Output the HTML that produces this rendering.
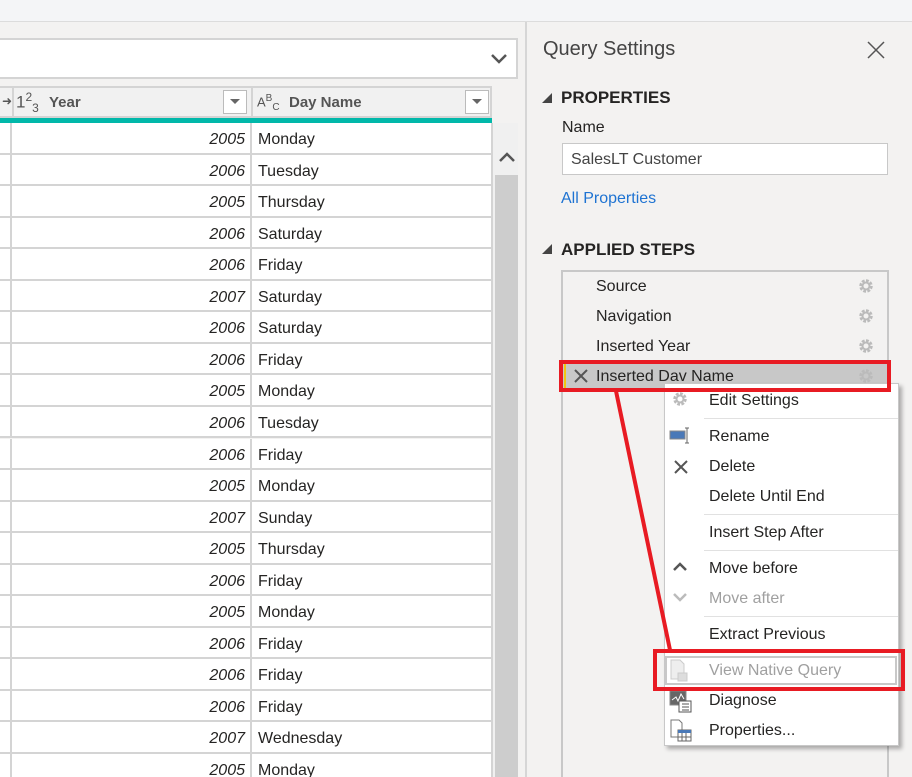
<!DOCTYPE html>
<html><head><style>
*{margin:0;padding:0;box-sizing:border-box}
html,body{width:912px;height:777px;overflow:hidden}
body{background:#f3f2f1;font-family:"Segoe UI","Liberation Sans",sans-serif;position:relative;color:#252423}
.a{position:absolute}
.row{position:absolute;left:0;width:492px;height:31.55px;border-bottom:2px solid #d4d4d4;background:#fff;font-size:16px}
.row .c0{position:absolute;left:0;top:0;width:12px;height:100%;border-right:2px solid #d4d4d4}
.row .y{position:absolute;left:12px;width:240px;text-align:right;padding-right:5px;font-style:italic;border-right:2px solid #d4d4d4;height:30px;top:0;line-height:33px}
.row .d{position:absolute;left:258px;line-height:33px}
.step{position:absolute;left:596px;font-size:16px}
.gear{position:absolute;left:858px;width:16px;height:16px}
.mi{position:absolute;left:709px;font-size:16px;color:#252423}
.sep{position:absolute;left:704px;width:194px;height:1px;background:#e1e1e1}
</style></head><body>
<div class="a" style="left:0;top:0;width:912px;height:22px;background:#f4f5f7;border-bottom:1px solid #dcdcdc"></div>
<div class="a" style="left:0;top:38px;width:518px;height:41px;background:#fff;border:2px solid #d4d4d4;border-left:none"></div>
<svg class="a" style="left:489px;top:52px" width="20" height="14"><path d="M3 3 L10 10 L17 3" stroke="#555" stroke-width="2.5" fill="none"/></svg>
<div class="a" style="left:0;top:86px;width:492px;height:32px;background:#f1f1f1;border:2px solid #d4d4d4;border-left:none"></div>
<div class="a" style="left:12px;top:86px;width:2px;height:32px;background:#d4d4d4"></div>
<div class="a" style="left:251px;top:86px;width:2px;height:32px;background:#d4d4d4"></div>
<div class="a" style="left:2px;top:94px;width:9px;height:18px;font-size:12px;color:#555">➜</div>
<div class="a" style="left:16px;top:90px;font-size:17px;color:#555">1<sup style="font-size:12px">2</sup><sub style="font-size:12px">3</sub></div>
<div class="a" style="left:49px;top:94px;font-size:15px;font-weight:bold;color:#555">Year</div>
<div class="a" style="left:223px;top:90px;width:24px;height:24px;border:1px solid #bbb;background:#fff"></div>
<svg class="a" style="left:229px;top:98px" width="12" height="8"><path d="M1 1 L11 1 L6 6Z" fill="#666"/></svg>
<div class="a" style="left:257px;top:93px;font-size:13px;color:#555">A<sup style="font-size:10px">B</sup><sub style="font-size:10px">C</sub></div>
<div class="a" style="left:289px;top:94px;font-size:15px;font-weight:bold;color:#555">Day Name</div>
<div class="a" style="left:465px;top:90px;width:24px;height:24px;border:1px solid #bbb;background:#fff"></div>
<svg class="a" style="left:471px;top:98px" width="12" height="8"><path d="M1 1 L11 1 L6 6Z" fill="#666"/></svg>
<div class="a" style="left:0;top:118px;width:492px;height:6px;background:#01b8aa"></div>
<div id="rows"></div>
<div class="a" style="left:491px;top:123px;width:2px;height:654px;background:#d4d4d4"></div>
<div class="a" style="left:493px;top:123px;width:25px;height:654px;background:#f0f0f0"></div>
<svg class="a" style="left:497px;top:150px" width="20" height="14"><path d="M3 11 L10 4 L17 11" stroke="#555" stroke-width="2.5" fill="none"/></svg>
<div class="a" style="left:495px;top:175px;width:23px;height:602px;background:#cdcdcd"></div>
<div class="a" style="left:525px;top:22px;width:2px;height:755px;background:#d6d6d6"></div>
<div class="a" style="left:543px;top:38px;font-size:20px;color:#444">Query Settings</div>
<svg class="a" style="left:866px;top:40px" width="20" height="20"><path d="M2 2 L18 18 M18 2 L2 18" stroke="#555" stroke-width="1.5"/></svg>
<svg class="a" style="left:541px;top:92px" width="12" height="12"><path d="M11 1 L11 11 L1 11Z" fill="#444"/></svg>
<div class="a" style="left:561px;top:88px;font-size:17px;font-weight:bold;color:#252423">PROPERTIES</div>
<div class="a" style="left:562px;top:119px;font-size:16px">Name</div>
<div class="a" style="left:562px;top:143px;width:326px;height:32px;background:#fff;border:1px solid #c8c8c8;font-size:16px;padding:7px 8px;color:#444">SalesLT Customer</div>
<div class="a" style="left:561px;top:190px;font-size:16px;color:#1e73d2">All Properties</div>
<svg class="a" style="left:541px;top:243px" width="12" height="12"><path d="M11 1 L11 11 L1 11Z" fill="#444"/></svg>
<div class="a" style="left:561px;top:240px;font-size:17px;font-weight:bold">APPLIED STEPS</div>
<div class="a" style="left:561px;top:270px;width:328px;height:520px;border:2px solid #c8c8c8"></div>
<div class="step" style="top:278px">Source</div>
<div class="step" style="top:308px">Navigation</div>
<div class="step" style="top:338px">Inserted Year</div>
<div class="a" style="left:563px;top:363px;width:324px;height:26px;background:#c8c8c8"></div>
<div class="a" style="left:564px;top:364px;width:2px;height:24px;background:#f2c811"></div>
<svg class="a" style="left:573px;top:368px" width="16" height="16"><path d="M2 2 L14 14 M14 2 L2 14" stroke="#555" stroke-width="2"/></svg>
<div class="step" style="top:368px">Inserted Dav Name</div>
<svg width="0" height="0" style="position:absolute"><defs><g id="g"><circle cx="8" cy="8" r="5" fill="none" stroke="#bbb" stroke-width="3.5" stroke-dasharray="2.6 1.3"/><circle cx="8" cy="8" r="3.5" fill="none" stroke="#bbb" stroke-width="2"/></g></defs></svg>
<svg class="gear" style="top:278px"><use href="#g"/></svg>
<svg class="gear" style="top:308px"><use href="#g"/></svg>
<svg class="gear" style="top:338px"><use href="#g"/></svg>
<svg class="gear" style="top:368px"><use href="#g"/></svg>
<div class="a" style="left:664px;top:383px;width:235px;height:363px;background:#fff;border:1px solid #c8c8c8;box-shadow:3px 3px 4px rgba(0,0,0,.3)"></div>
<svg class="gear" style="left:672px;top:391px"><use href="#g"/></svg>
<div class="mi" style="top:392px">Edit Settings</div>
<div class="sep" style="top:418px"></div>
<svg class="a" style="left:669px;top:427px" width="22" height="18"><rect x="1" y="4" width="15" height="8" fill="#4a79b8" stroke="#888"/><path d="M18 1 V16 M16 1 H20 M16 16 H20" stroke="#666"/></svg>
<div class="mi" style="top:428px">Rename</div>
<svg class="a" style="left:673px;top:459px" width="16" height="16"><path d="M2 2 L14 14 M14 2 L2 14" stroke="#555" stroke-width="2"/></svg>
<div class="mi" style="top:458px">Delete</div>
<div class="mi" style="top:488px">Delete Until End</div>
<div class="sep" style="top:514px"></div>
<div class="mi" style="top:524px">Insert Step After</div>
<div class="sep" style="top:550px"></div>
<svg class="a" style="left:672px;top:562px" width="16" height="10"><path d="M2 8 L8 2 L14 8" stroke="#555" stroke-width="2.5" fill="none"/></svg>
<div class="mi" style="top:560px">Move before</div>
<svg class="a" style="left:672px;top:592px" width="16" height="10"><path d="M2 2 L8 8 L14 2" stroke="#bbb" stroke-width="2.5" fill="none"/></svg>
<div class="mi" style="top:590px;color:#a0a0a0">Move after</div>
<div class="sep" style="top:616px"></div>
<div class="mi" style="top:626px">Extract Previous</div>
<div class="a" style="left:665px;top:656px;width:232px;height:29px;border:2px solid #c8c8c8"></div>
<svg class="a" style="left:669px;top:659px" width="22" height="26"><path d="M2 1 H11 L15 5 V20 H2Z" fill="#eee" stroke="#ccc"/><rect x="9" y="14" width="9" height="8" fill="#ddd" stroke="#ccc"/></svg>
<div class="mi" style="top:662px;color:#a0a0a0">View Native Query</div>
<svg class="a" style="left:669px;top:690px" width="24" height="24"><rect x="1" y="1" width="16" height="14" fill="#666" stroke="#888"/><path d="M3 10 L7 7 L9 11 L12 4 L15 9" stroke="#fff" fill="none"/><rect x="10" y="11" width="12" height="11" fill="#fff" stroke="#555"/><path d="M13 14 H20 M13 17 H20 M13 20 H20" stroke="#555"/></svg>
<div class="mi" style="top:692px">Diagnose</div>
<svg class="a" style="left:669px;top:719px" width="24" height="24"><path d="M2 1 H10 L13 4 V18 H2Z" fill="#fff" stroke="#777"/><rect x="9" y="11" width="13" height="11" fill="#fff" stroke="#666"/><rect x="9" y="11" width="13" height="3" fill="#4a79b8"/><path d="M13 14 V22 M17 14 V22 M9 18 H22" stroke="#666"/></svg>
<div class="mi" style="top:722px">Properties...</div>
<div class="a" style="left:559px;top:360px;width:332px;height:32px;border:4px solid #e81b23"></div>
<div class="a" style="left:653px;top:649px;width:252px;height:42px;border:4px solid #e81b23"></div>
<svg class="a" style="left:0;top:0" width="912" height="777"><path d="M616 391 L670 650" stroke="#e81b23" stroke-width="4"/></svg>
<script>
var years=[2005,2006,2005,2006,2006,2007,2006,2006,2005,2006,2006,2005,2007,2005,2006,2005,2006,2006,2006,2007,2005];
var days=["Monday","Tuesday","Thursday","Saturday","Friday","Saturday","Saturday","Friday","Monday","Tuesday","Friday","Monday","Sunday","Thursday","Friday","Monday","Friday","Friday","Friday","Wednesday","Monday"];
var h="";for(var i=0;i<21;i++){h+='<div class="row" style="top:'+(123+i*31.55)+'px"><div class="c0"></div><div class="y">'+years[i]+'</div><div class="d">'+days[i]+'</div></div>';}
document.getElementById("rows").innerHTML=h;
</script>
</body></html>
